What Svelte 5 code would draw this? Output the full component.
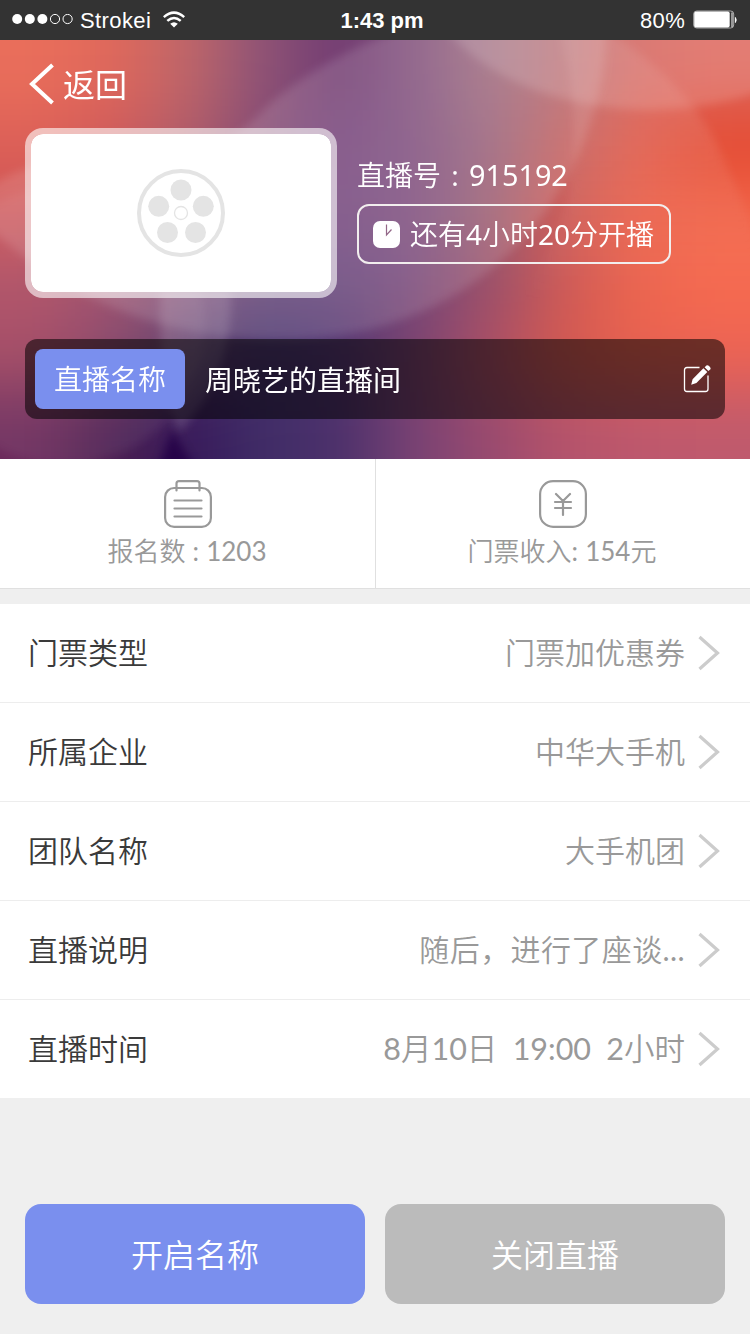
<script lang="ts">
    // Colours of the cover backdrop, row by row from the top
    const cover = [
        ["#e96e5b", "#df685b", "#bf6669", "#8e5376", "#723c72", "#83537f", "#a06e80", "#b5696f", "#d5625b", "#de665c"],
        ["#dc5f57", "#cf595a", "#b05b68", "#854a74", "#76467e", "#80507f", "#97627c", "#c2605f", "#e15b49", "#e44a31"],
        ["#ce5557", "#bb535f", "#965372", "#7c4a7c", "#75487f", "#7f4f80", "#9a6073", "#cf5d58", "#ec644e", "#f2664b"],
        ["#ab4c63", "#984b69", "#7e4a75", "#65487a", "#66457a", "#77497b", "#984f6a", "#cd5a58", "#ec664f", "#f66b50"],
        ["#a2455f", "#853f64", "#563868", "#46336c", "#523572", "#7a426f", "#ac4f66", "#d4594f", "#e9614f", "#ed6353"],
        ["#6c2b5c", "#4b2052", "#36185a", "#402d67", "#4b306b", "#784274", "#984a6f", "#b4536b", "#bd586d", "#bf5a6d"],
    ];

    const reelHoles = [
        [44, 21],
        [66.3, 37.3],
        [58.5, 63.5],
        [30.5, 63.5],
        [21.7, 37.3],
    ];

    const rows = [
        { label: "门票类型", value: "门票加优惠券" },
        { label: "所属企业", value: "中华大手机" },
        { label: "团队名称", value: "大手机团" },
        { label: "直播说明", value: "随后，进行了座谈...", wide: true },
        { label: "直播时间", value: "8月10日 19:00 2小时", time: true },
    ];

    // Split into runs of digits and runs of other characters
    function runs(text: string) {
        return text.match(/[\d:.]+|[^\d:.]+/g) ?? [];
    }
</script>

{#snippet mixed(text: string)}
    {#each runs(text) as part}<span class:num={/[\d:.]/.test(part)}>{part}</span>{/each}
{/snippet}

<div class="page">
    <div class="status">
        <div class="carrier">
            <svg width="62" height="12" viewBox="0 0 62 12">
                {#each [0, 1, 2, 3, 4] as i}
                    <circle
                        cx={5.2 + i * 12.6}
                        cy="5"
                        r={i < 3 ? 5 : 4.6}
                        fill={i < 3 ? "#fff" : "none"}
                        stroke={i < 3 ? "none" : "#fff"}
                    />
                {/each}
            </svg>
            <span class="name">Strokei</span>
            <svg class="wifi" width="22" height="18" viewBox="0 0 22 18">
                <g fill="none" stroke="#fff" stroke-width="2.5">
                    <path d="M.8 6.1Q11 -2.9 21.2 6.1" />
                    <path d="M4.3 9.9Q11 4 17.7 9.9" />
                </g>
                <path d="M7.2 12.8Q11 9.6 14.8 12.8L11 16.4Z" fill="#fff" />
            </svg>
        </div>
        <div class="clock">1:43 pm</div>
        <div class="power">
            <span>80%</span>
            <svg width="45" height="20" viewBox="0 0 45 20">
                <rect x=".7" y="1" width="40" height="17" rx="3" fill="none" stroke="#aaa" />
                <rect x="1.2" y="1.5" width="35.5" height="16" rx="2" fill="#fff" />
                <path d="M39 2.5v14.5" stroke="#fff" />
                <path d="M42.4 7.5q1.6 2.5 0 5z" fill="#fff" stroke="#fff" />
            </svg>
        </div>
    </div>

    <header class="hero">
        <svg class="cover" viewBox="0 0 750 419" preserveAspectRatio="none">
            <defs>
                <filter id="mix" filterUnits="userSpaceOnUse" x="-200" y="-200" width="1150" height="820" color-interpolation-filters="sRGB">
                    <feGaussianBlur stdDeviation="32" />
                </filter>
                <filter id="soft" filterUnits="userSpaceOnUse" x="-50" y="-250" width="850" height="750" color-interpolation-filters="sRGB">
                    <feGaussianBlur stdDeviation="5" />
                </filter>
                <linearGradient id="fade" x1="0" y1="0" x2="0" y2="260" gradientUnits="userSpaceOnUse">
                    <stop offset=".4" stop-color="#fff" />
                    <stop offset="1" stop-color="#fff" stop-opacity="0" />
                </linearGradient>
            </defs>
            <g filter="url(#mix)">
                {#each cover as line, r}
                    {#each line as color, c}
                        <rect
                            x={c === 0 ? -150 : c * 75}
                            y={r === 0 ? -150 : r * 70}
                            width={c === 0 || c === 9 ? 226 : 76}
                            height={r === 0 || r === 5 ? 221 : 71}
                            fill={color}
                        />
                    {/each}
                {/each}
            </g>
            <g fill="#fff" filter="url(#soft)">
                <path
                    opacity=".13"
                    d="M-20 152Q20 126 60 120H200Q245 92 268 65Q320 22 375 0L440 -30H606C614 125 500 300 280 300C160 300 60 255 -20 180Z"
                />
                <path opacity=".09" fill="url(#fade)" d="M560 -10H606Q700 50 728 130Q750 170 775 260H520Q600 150 560 -10Z" />
                <ellipse cx="650" cy="-80" rx="230" ry="150" opacity=".15" />
                <path opacity=".14" d="M160 250Q158 330 178 393Q234 335 231 250Z" />
                <circle cx="65" cy="285" r="140" opacity=".06" />
            </g>
            <path d="M172 390L158 430H196Z" fill="#240047" opacity=".85" filter="url(#soft)" />
        </svg>

        <div class="content">
            <div class="back">
                <svg width="26" height="42" viewBox="0 0 26 42">
                    <path d="M23.5 2L3 21L23.5 40" fill="none" stroke="#fff" stroke-width="4" />
                </svg>
                <span>返回</span>
            </div>

            <div class="live">
                <div class="poster">
                    <svg width="88" height="88" viewBox="0 0 88 88">
                        <circle cx="44" cy="44" r="42" fill="none" stroke="#e4e4e4" stroke-width="4" />
                        {#each reelHoles as [cx, cy]}
                            <circle {cx} {cy} r="10.5" fill="#e4e4e4" />
                        {/each}
                        <circle cx="44" cy="44" r="6.5" fill="none" stroke="#e4e4e4" stroke-width="1.3" />
                    </svg>
                </div>
                <div class="info">
                    <div class="number">直播号<span class="colon">:</span><span class="digits">915192</span></div>
                    <div class="countdown">
                        <svg width="27" height="27" viewBox="0 0 27 27">
                            <rect width="27" height="27" rx="7" fill="#fff" />
                            <path d="M13.5 3.5V14L18.5 8.5" fill="none" stroke="#936788" stroke-width="1.2" />
                        </svg>
                        <span>还有<i>4</i>小时<i>20</i>分开播</span>
                    </div>
                </div>
            </div>

            <div class="title">
                <span class="tag">直播名称</span>
                <span class="room">周晓艺的直播间</span>
                <svg width="28" height="28" viewBox="0 0 28 28">
                    <path
                        d="M16.5 2.5H4Q1.5 2.5 1.5 5V24Q1.5 26.5 4 26.5H22.5Q25 26.5 25 24V10.5"
                        fill="none"
                        stroke="#fff"
                        stroke-width="1.3"
                    />
                    <path d="M8.2 19.8L9.6 14.3L20.4 3.3L24.3 7.1L13.4 18.1Z M21.6 2.2L23.8 .3Q25 0 26.3 1.3T27.7 4L25.4 6.1Z" fill="#fff" />
                </svg>
            </div>
        </div>
    </header>

    <section class="stats">
        <div class="stat">
            <svg width="48" height="48" viewBox="0 0 48 48" fill="none" stroke="#999" stroke-width="2.2" stroke-linecap="round">
                <rect x="1.1" y="8" width="45.8" height="38.9" rx="9" />
                <path d="M12.5 10.5V3.5Q12.5 1.1 15 1.1H33Q35.5 1.1 35.5 3.5V10.5M10.5 20.5H37.5M10.5 28.5H37.5M10.5 36.5H37.5" />
            </svg>
            <span class="signups">{@render mixed("报名数 : 1203")}</span>
        </div>
        <div class="stat">
            <svg width="48" height="48" viewBox="0 0 48 48" fill="none" stroke="#999" stroke-width="2.2" stroke-linecap="round">
                <rect x="1.1" y="1.1" width="45.8" height="45.8" rx="13" />
                <path d="M17 14L24 21L31 14M24 21V35M16 22H32M16 28H32" />
            </svg>
            <span class="income">{@render mixed("门票收入: 154元")}</span>
        </div>
    </section>

    <section class="list">
        {#each rows as row}
            <div class="row">
                <span class="label">{row.label}</span>
                <span class="value" class:wide={row.wide} class:time={row.time}>{@render mixed(row.value)}</span>
                <svg width="22" height="36" viewBox="0 0 22 36">
                    <path d="M1.5 2L19.5 18L1.5 34" fill="none" stroke="#ccc" stroke-width="3.2" />
                </svg>
            </div>
        {/each}
    </section>

    <div class="actions">
        <button class="open">开启名称</button>
        <button class="close">关闭直播</button>
    </div>
</div>

<style>
    :global(body) {
        margin: 0;
        background: #efefef;
    }

    .page {
        width: 750px;
        height: 1334px;
        overflow: hidden;
        background: #efefef;
        font-family: Lato, "Noto Sans CJK SC", sans-serif;
        font-weight: 350;
    }

    svg {
        display: block;
        flex-shrink: 0;
    }

    .num {
        font-weight: 400;
    }

    .status {
        box-sizing: border-box;
        height: 40px;
        padding: 0 12px;
        display: grid;
        grid-template-columns: 1fr auto 1fr;
        align-items: center;
        background: #333;
        color: #fff;
        font: 400 22px "Liberation Sans", sans-serif;
    }

    .carrier,
    .power {
        display: flex;
        align-items: center;
    }

    .name {
        margin: 1px 0 0 6px;
        letter-spacing: 0.4px;
    }

    .wifi {
        margin-left: 12px;
    }

    .clock {
        padding: 1px 0 0 14px;
        font-weight: 700;
    }

    .power {
        justify-content: flex-end;
        gap: 8px;
    }

    .power span {
        padding-top: 1px;
        letter-spacing: 0.3px;
    }

    .hero {
        position: relative;
        height: 419px;
        overflow: hidden;
        color: #fff;
    }

    .cover {
        position: absolute;
        inset: 0;
        width: 100%;
        height: 100%;
    }

    .content {
        position: relative;
        box-sizing: border-box;
        padding: 0 25px;
    }

    .back {
        height: 88px;
        padding-left: 4px;
        display: flex;
        align-items: center;
        gap: 8px;
        font-size: 32px;
        font-weight: 400;
    }

    .back span {
        padding-bottom: 3px;
    }

    .live {
        display: flex;
        gap: 20px;
    }

    .poster {
        box-sizing: border-box;
        width: 312px;
        height: 170px;
        border: 6px solid rgba(255, 255, 255, 0.6);
        border-radius: 18px;
        background: #fff;
        background-clip: padding-box;
        display: flex;
        align-items: center;
        justify-content: center;
    }

    .info {
        padding-top: 26px;
    }

    .number {
        height: 42px;
        line-height: 42px;
        margin-bottom: 8px;
        font-size: 28px;
        display: flex;
    }

    .colon {
        width: 28px;
        text-align: center;
        font-weight: 400;
    }

    .digits,
    .countdown i {
        font-family: "Noto Sans", "Open Sans", sans-serif;
        font-style: normal;
        font-weight: 400;
    }

    .digits {
        font-size: 28.8px;
    }

    .countdown {
        box-sizing: border-box;
        width: 314px;
        height: 60px;
        padding-left: 14px;
        border: 2px solid #f2eeee;
        border-radius: 12px;
        display: flex;
        align-items: center;
        gap: 10px;
        font-size: 28px;
        white-space: nowrap;
    }

    .countdown span {
        padding-bottom: 3px;
    }

    .title {
        box-sizing: border-box;
        height: 80px;
        margin-top: 41px;
        padding: 0 14px 0 10px;
        display: flex;
        align-items: center;
        border-radius: 12px;
        background: rgba(0, 0, 0, 0.54);
        font-size: 28px;
    }

    .tag {
        width: 150px;
        height: 60px;
        line-height: 60px;
        border-radius: 8px;
        background: #7a8fee;
        text-align: center;
    }

    .room {
        flex: 1;
        margin-left: 20px;
        font-weight: 400;
    }

    .stats {
        height: 129px;
        display: grid;
        grid-template-columns: 375px 375px;
        background: #fff;
        border-bottom: 1px solid #e0e0e0;
    }

    .stat {
        display: flex;
        flex-direction: column;
        align-items: center;
        padding-top: 21px;
        color: #999;
        font-size: 26px;
        line-height: 46px;
    }

    .stat:first-child {
        padding-left: 1px;
    }

    .stat + .stat {
        border-left: 1px solid #e0e0e0;
    }

    .signups,
    .income {
        margin-right: 2px;
        white-space: pre;
    }

    .list {
        margin-top: 15px;
        background: #fff;
    }

    .row {
        box-sizing: border-box;
        height: 99px;
        padding: 0 30px 0 28px;
        display: flex;
        align-items: center;
        border-bottom: 1px solid #ededed;
        font-size: 30px;
    }

    .row:last-child {
        height: 98px;
        border-bottom: none;
    }

    .label,
    .value {
        padding-bottom: 4px;
    }

    .label {
        flex: 1;
        color: #3a3a3a;
    }

    .value {
        margin-right: 13px;
        color: #999;
    }

    .wide {
        letter-spacing: 0.4px;
    }

    .time {
        font-size: 30.5px;
        word-spacing: 7px;
    }

    .actions {
        margin-top: 106px;
        padding: 0 25px;
        display: flex;
        gap: 20px;
    }

    button {
        flex: 1;
        height: 100px;
        padding: 0 0 3px;
        border: none;
        border-radius: 16px;
        color: #fff;
        font: inherit;
        font-size: 32px;
    }

    .open {
        background: #7a8fee;
    }

    .close {
        background: #bbb;
    }
</style>
